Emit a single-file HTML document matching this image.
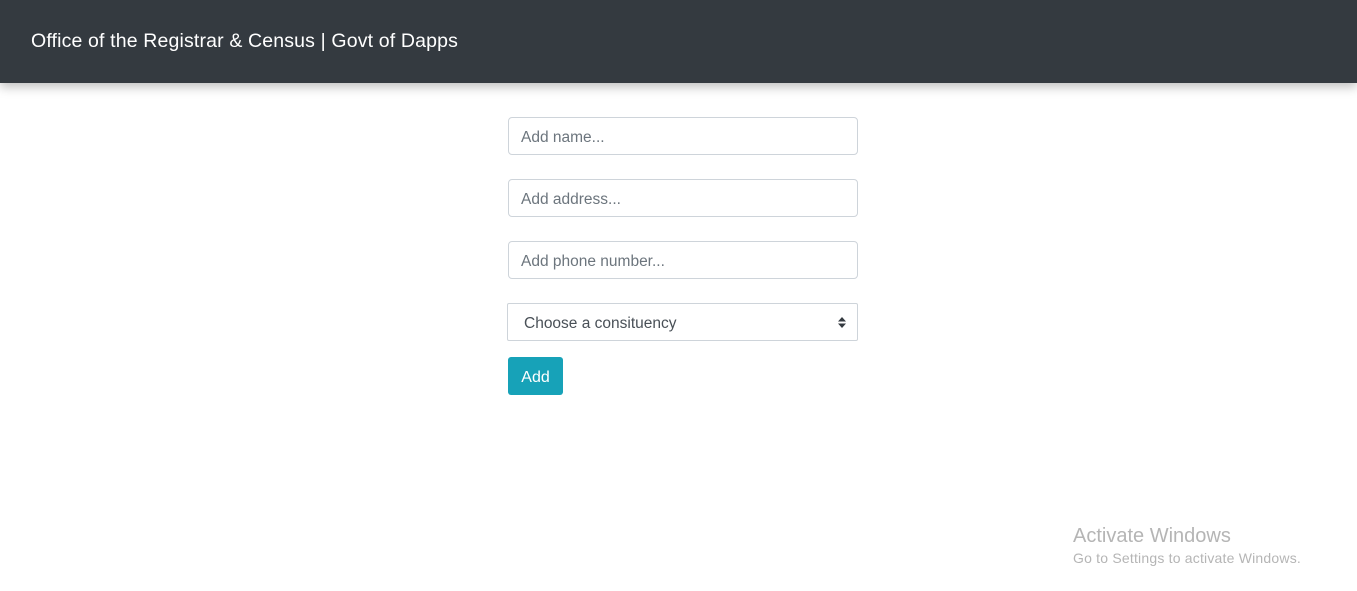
<!DOCTYPE html>
<html><head><style>
body{margin:0;width:1357px;height:591px;background:#fff;font-family:"Liberation Sans",sans-serif;position:relative;overflow:hidden}
.nav{height:83px;background:#343a40;box-shadow:0 4px 10px rgba(0,0,0,.25);position:relative}
.nav span{position:absolute;left:31px;top:30px;color:#fff;font-size:19.5px;letter-spacing:0.15px}
.in{position:absolute;left:508px;width:348px;height:36px;border:1px solid #ced4da;border-radius:4px;box-sizing:content-box;font-size:15.5px;color:#6c757d;line-height:40px;text-indent:12px}
.sel{left:507px;color:#495057;text-indent:16px;border-radius:2px;width:349px}
.btn{position:absolute;left:508px;top:357px;width:55px;height:38px;background:#17a2b8;border-radius:3px;color:#fff;font-size:16px;line-height:41px;text-align:center}
.wm{position:absolute;left:1073px;color:#b5b5b5}
</style></head><body>
<div class="nav"><span>Office of the Registrar &amp; Census | Govt of Dapps</span></div>
<div class="in" style="top:117px">Add name...</div>
<div class="in" style="top:179px">Add address...</div>
<div class="in" style="top:241px">Add phone number...</div>
<div class="in sel" style="top:303px">Choose a consituency<svg style="position:absolute;right:11px;top:13px" width="8" height="11" viewBox="0 0 8 11"><path d="M0 4.5L4 0 8 4.5ZM0 6.5L4 11 8 6.5Z" fill="#343a40"/></svg></div>
<div class="btn">Add</div>
<div class="wm" style="top:525px;font-size:20px">Activate Windows</div>
<div class="wm" style="top:550px;font-size:14px;letter-spacing:0.2px">Go to Settings to activate Windows.</div>
</body></html>
